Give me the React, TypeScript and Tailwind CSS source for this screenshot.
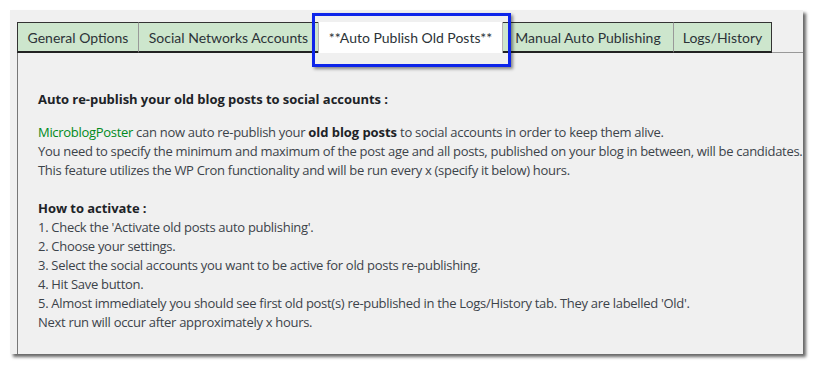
import React from 'react';

const tabs = [
  { label: 'General Options', w: 'w-[121px]', active: false },
  { label: 'Social Networks Accounts', w: 'w-[180px]', active: false },
  { label: '**Auto Publish Old Posts**', w: 'w-[185px]', active: true },
  { label: 'Manual Auto Publishing', w: 'w-[170px]', active: false },
  { label: 'Logs/History', w: 'w-[99px]', active: false },
];

const steps = [
  "1. Check the 'Activate old posts auto publishing'.",
  '2. Choose your settings.',
  '3. Select the social accounts you want to be active for old posts re-publishing.',
  '4. Hit Save button.',
  "5. Almost immediately you should see first old post(s) re-published in the Logs/History tab. They are labelled 'Old'.",
  'Next run will occur after approximately x hours.',
];

export default function App() {
  return (
    <div className="w-[814px] h-[365px] bg-white pt-[10px] pl-[10px] font-['Lato',sans-serif] text-[14px] leading-[19px] text-[#3c434a]">
      <div className="relative w-[793px] h-[344px] bg-[#f0f0f0] shadow-[3px_3px_3px_rgba(0,0,0,0.6)] pt-[12px] pl-[7px] flex flex-col">
        {/* Tabs */}
        <div className="flex items-stretch h-[31px]">
          {tabs.map((t, i) =>
            t.active ? (
              <div
                key={i}
                className={`${t.w} flex items-center justify-center bg-white border-x border-[#b5b5b5] text-[#2c3338]`}
              >
                {t.label}
              </div>
            ) : (
              <div
                key={i}
                className={`${t.w} flex items-center justify-center bg-[#cde6cd] border-t border-t-[#333] border-b-2 border-b-[#222] text-[#2c3338] ${
                  i === 0 ? 'border-l border-l-[#333]' : ''
                } ${i === 1 ? 'border-l border-l-[#999]' : ''} ${i === 4 ? 'border-l border-l-[#999] border-r border-r-[#333]' : ''}`}
              >
                {t.label}
              </div>
            )
          )}
          <div className="flex-1 flex flex-col justify-end">
            <div className="h-[3px] border-b border-[#999]" />
          </div>
        </div>

        {/* Content */}
        <div className="flex-1 border-l border-[#777] pl-[20px] pt-[37px] whitespace-nowrap font-['Open_Sans',sans-serif] text-[13px] tracking-[-0.3px]">
          <p className="font-bold tracking-[-0.05px] text-[#1d2327]">Auto re-publish your old blog posts to social accounts :</p>
          <p className="mt-[14px]">
            <span className="text-[#008a20]">MicroblogPoster</span> can now auto re-publish your{' '}
            <span className="font-bold tracking-[-0.05px] text-[#1d2327]">old blog posts</span> to social accounts in order to keep them alive.
          </p>
          <p>
            You need to specify the minimum and maximum of the post age and all posts, published on your blog in between, will be candidates.
          </p>
          <p>This feature utilizes the WP Cron functionality and will be run every x (specify it below) hours.</p>
          <p className="mt-[19px] font-bold tracking-[-0.05px] text-[#1d2327]">How to activate :</p>
          {steps.map((s, i) => (
            <p key={i}>{s}</p>
          ))}
        </div>

        {/* Highlight box */}
        <div className="absolute left-[302px] top-[3px] w-[199px] h-[54px] border-[3px] border-[#0d25ea] shadow-[2px_2px_3px_rgba(0,0,0,0.45)]" />
      </div>
    </div>
  );
}
